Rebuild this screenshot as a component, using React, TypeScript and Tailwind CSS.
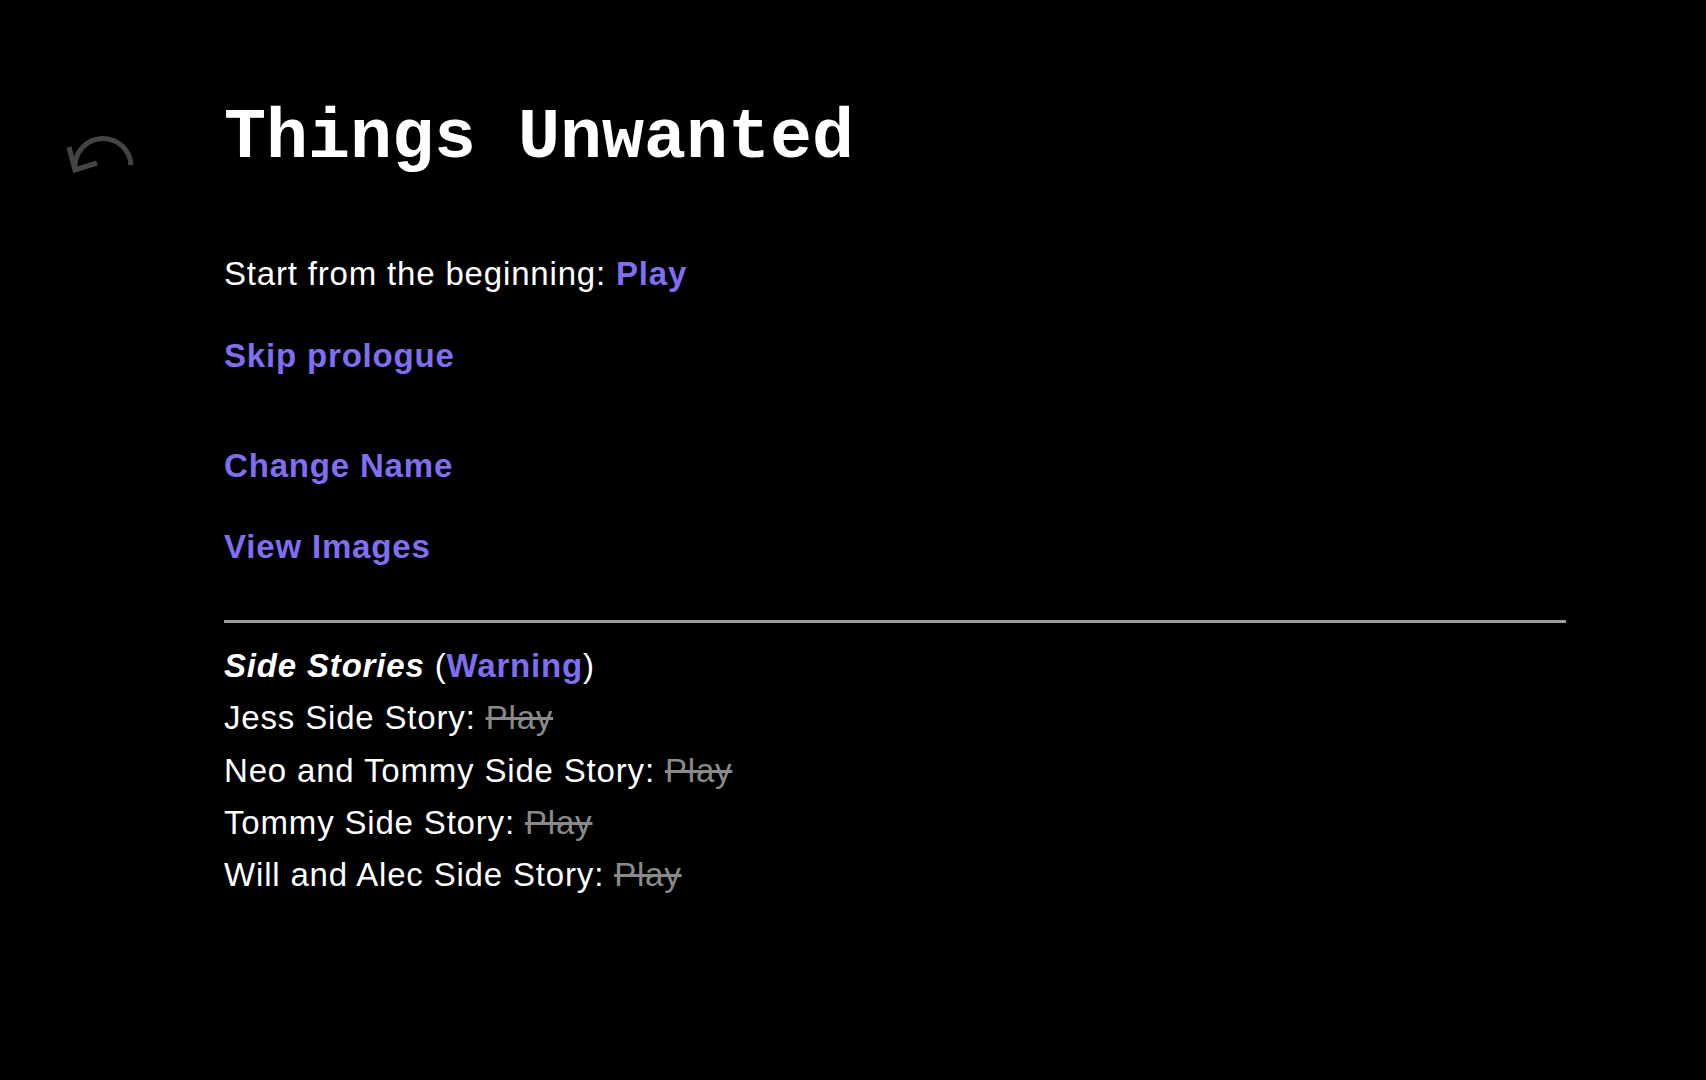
import React from 'react';

const link = 'font-bold text-[#7f6ff0] cursor-pointer';

function BackArrow() {
  return (
    <svg width="70" height="40" viewBox="0 0 70 40" fill="none">
      <path
        d="M9 35 A28 28 0 0 1 65 32"
        stroke="#444444"
        strokeWidth="5"
        strokeLinecap="butt"
      />
      <path
        d="M3 14 L9 37 L31 30"
        stroke="#444444"
        strokeWidth="5"
        strokeLinejoin="miter"
      />
    </svg>
  );
}

const sideStories = [
  'Jess Side Story',
  'Neo and Tommy Side Story',
  'Tommy Side Story',
  'Will and Alec Side Story',
];

export default function App() {
  return (
    <div className="min-h-screen bg-black text-white font-['Liberation_Sans',Arial,sans-serif]">
      <div className="flex pt-[104px]">
        {/* Back */}
        <div className="w-[224px] shrink-0 pl-[66px] pt-[29px]">
          <BackArrow />
        </div>

        {/* Content */}
        <div className="w-[1342px] text-[33px] leading-[52px] tracking-[0.025em]">
          <h1 className="font-['Liberation_Mono','Courier_New',monospace] font-bold text-[70px] leading-[70px] tracking-normal">
            Things Unwanted
          </h1>

          <p className="mt-[74px]">
            Start from the beginning: <span className={link}>Play</span>
          </p>
          <p className="mt-[30px]">
            <span className={link}>Skip prologue</span>
          </p>

          <p className="mt-[58px]">
            <span className={link}>Change Name</span>
          </p>
          <p className="mt-[29px]">
            <span className={link}>View Images</span>
          </p>

          <div className="mt-[47px] h-[3px] bg-[#9e9e9e]" />

          <div className="mt-[17px] leading-[52.3px]">
            <p>
              <span className="font-bold italic">Side Stories</span> (
              <span className={link}>Warning</span>)
            </p>
            {sideStories.map((s) => (
              <p key={s}>
                {s}: <span className="text-[#8a8a8a] line-through">Play</span>
              </p>
            ))}
          </div>
        </div>
      </div>
    </div>
  );
}
